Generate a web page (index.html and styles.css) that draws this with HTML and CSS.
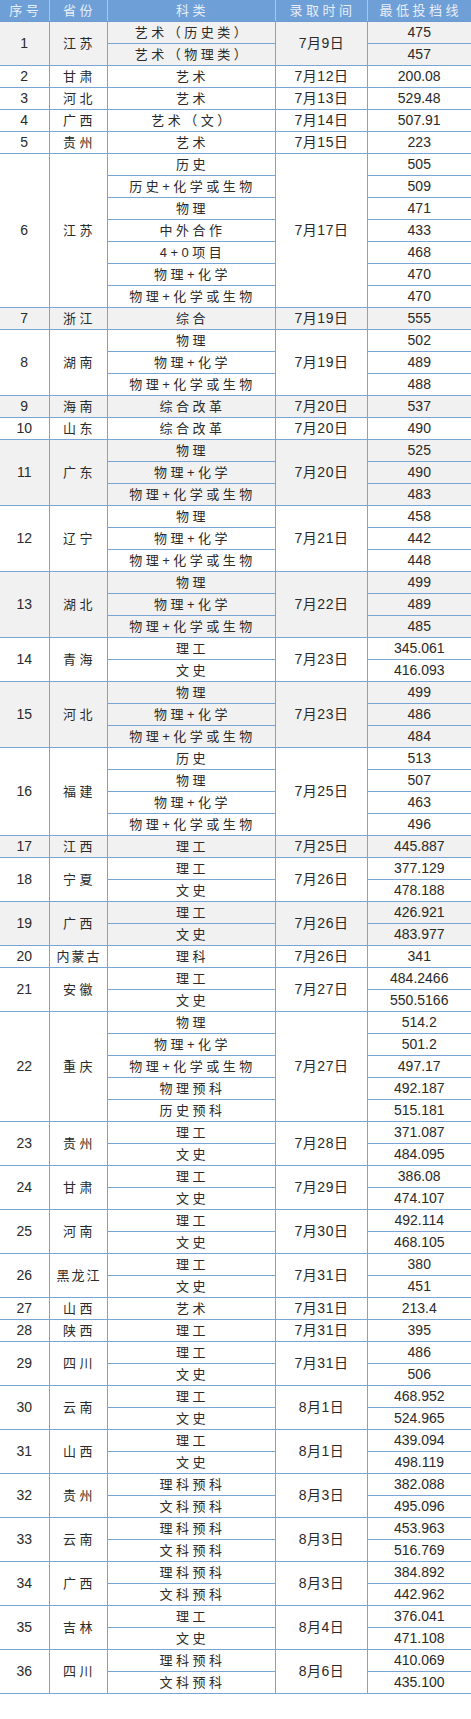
FILE: index.html
```html
<!DOCTYPE html>
<html lang="zh">
<head>
<meta charset="utf-8">
<title>录取时间与最低投档线</title>
<link rel="stylesheet" href="styles.css">
</head>
<body>
<table class="grid">
<colgroup>
<col class="c-no"><col class="c-prov"><col class="c-sub"><col class="c-date"><col class="c-score">
</colgroup>
<thead>
<tr><th>序号</th><th>省份</th><th>科类</th><th>录取时间</th><th>最低投档线</th></tr>
</thead>
<tbody>
<tr class="alt"><td rowspan="2">1</td><td rowspan="2" class="prov">江苏</td><td class="sub">艺术（历史类）</td><td rowspan="2" class="date">7月9日</td><td class="score">475</td></tr>
<tr class="alt"><td class="sub">艺术（物理类）</td><td class="score">457</td></tr>
<tr><td>2</td><td class="prov">甘肃</td><td class="sub">艺术</td><td class="date">7月12日</td><td class="score">200.08</td></tr>
<tr><td>3</td><td class="prov">河北</td><td class="sub">艺术</td><td class="date">7月13日</td><td class="score">529.48</td></tr>
<tr><td>4</td><td class="prov">广西</td><td class="sub">艺术（文）</td><td class="date">7月14日</td><td class="score">507.91</td></tr>
<tr><td>5</td><td class="prov">贵州</td><td class="sub">艺术</td><td class="date">7月15日</td><td class="score">223</td></tr>
<tr><td rowspan="7">6</td><td rowspan="7" class="prov">江苏</td><td class="sub">历史</td><td rowspan="7" class="date">7月17日</td><td class="score">505</td></tr>
<tr><td class="sub">历史+化学或生物</td><td class="score">509</td></tr>
<tr><td class="sub">物理</td><td class="score">471</td></tr>
<tr><td class="sub">中外合作</td><td class="score">433</td></tr>
<tr><td class="sub">4+0项目</td><td class="score">468</td></tr>
<tr><td class="sub">物理+化学</td><td class="score">470</td></tr>
<tr><td class="sub">物理+化学或生物</td><td class="score">470</td></tr>
<tr class="alt"><td>7</td><td class="prov">浙江</td><td class="sub">综合</td><td class="date">7月19日</td><td class="score">555</td></tr>
<tr><td rowspan="3">8</td><td rowspan="3" class="prov">湖南</td><td class="sub">物理</td><td rowspan="3" class="date">7月19日</td><td class="score">502</td></tr>
<tr><td class="sub">物理+化学</td><td class="score">489</td></tr>
<tr><td class="sub">物理+化学或生物</td><td class="score">488</td></tr>
<tr class="alt"><td>9</td><td class="prov">海南</td><td class="sub">综合改革</td><td class="date">7月20日</td><td class="score">537</td></tr>
<tr><td>10</td><td class="prov">山东</td><td class="sub">综合改革</td><td class="date">7月20日</td><td class="score">490</td></tr>
<tr class="alt"><td rowspan="3">11</td><td rowspan="3" class="prov">广东</td><td class="sub">物理</td><td rowspan="3" class="date">7月20日</td><td class="score">525</td></tr>
<tr class="alt"><td class="sub">物理+化学</td><td class="score">490</td></tr>
<tr class="alt"><td class="sub">物理+化学或生物</td><td class="score">483</td></tr>
<tr><td rowspan="3">12</td><td rowspan="3" class="prov">辽宁</td><td class="sub">物理</td><td rowspan="3" class="date">7月21日</td><td class="score">458</td></tr>
<tr><td class="sub">物理+化学</td><td class="score">442</td></tr>
<tr><td class="sub">物理+化学或生物</td><td class="score">448</td></tr>
<tr class="alt"><td rowspan="3">13</td><td rowspan="3" class="prov">湖北</td><td class="sub">物理</td><td rowspan="3" class="date">7月22日</td><td class="score">499</td></tr>
<tr class="alt"><td class="sub">物理+化学</td><td class="score">489</td></tr>
<tr class="alt"><td class="sub">物理+化学或生物</td><td class="score">485</td></tr>
<tr><td rowspan="2">14</td><td rowspan="2" class="prov">青海</td><td class="sub">理工</td><td rowspan="2" class="date">7月23日</td><td class="score">345.061</td></tr>
<tr><td class="sub">文史</td><td class="score">416.093</td></tr>
<tr class="alt"><td rowspan="3">15</td><td rowspan="3" class="prov">河北</td><td class="sub">物理</td><td rowspan="3" class="date">7月23日</td><td class="score">499</td></tr>
<tr class="alt"><td class="sub">物理+化学</td><td class="score">486</td></tr>
<tr class="alt"><td class="sub">物理+化学或生物</td><td class="score">484</td></tr>
<tr><td rowspan="4">16</td><td rowspan="4" class="prov">福建</td><td class="sub">历史</td><td rowspan="4" class="date">7月25日</td><td class="score">513</td></tr>
<tr><td class="sub">物理</td><td class="score">507</td></tr>
<tr><td class="sub">物理+化学</td><td class="score">463</td></tr>
<tr><td class="sub">物理+化学或生物</td><td class="score">496</td></tr>
<tr class="alt"><td>17</td><td class="prov">江西</td><td class="sub">理工</td><td class="date">7月25日</td><td class="score">445.887</td></tr>
<tr><td rowspan="2">18</td><td rowspan="2" class="prov">宁夏</td><td class="sub">理工</td><td rowspan="2" class="date">7月26日</td><td class="score">377.129</td></tr>
<tr><td class="sub">文史</td><td class="score">478.188</td></tr>
<tr class="alt"><td rowspan="2">19</td><td rowspan="2" class="prov">广西</td><td class="sub">理工</td><td rowspan="2" class="date">7月26日</td><td class="score">426.921</td></tr>
<tr class="alt"><td class="sub">文史</td><td class="score">483.977</td></tr>
<tr><td>20</td><td class="prov tight">内蒙古</td><td class="sub">理科</td><td class="date">7月26日</td><td class="score">341</td></tr>
<tr><td rowspan="2">21</td><td rowspan="2" class="prov">安徽</td><td class="sub">理工</td><td rowspan="2" class="date">7月27日</td><td class="score">484.2466</td></tr>
<tr><td class="sub">文史</td><td class="score">550.5166</td></tr>
<tr><td rowspan="5">22</td><td rowspan="5" class="prov">重庆</td><td class="sub">物理</td><td rowspan="5" class="date">7月27日</td><td class="score">514.2</td></tr>
<tr><td class="sub">物理+化学</td><td class="score">501.2</td></tr>
<tr><td class="sub">物理+化学或生物</td><td class="score">497.17</td></tr>
<tr><td class="sub">物理预科</td><td class="score">492.187</td></tr>
<tr><td class="sub">历史预科</td><td class="score">515.181</td></tr>
<tr><td rowspan="2">23</td><td rowspan="2" class="prov">贵州</td><td class="sub">理工</td><td rowspan="2" class="date">7月28日</td><td class="score">371.087</td></tr>
<tr><td class="sub">文史</td><td class="score">484.095</td></tr>
<tr><td rowspan="2">24</td><td rowspan="2" class="prov">甘肃</td><td class="sub">理工</td><td rowspan="2" class="date">7月29日</td><td class="score">386.08</td></tr>
<tr><td class="sub">文史</td><td class="score">474.107</td></tr>
<tr><td rowspan="2">25</td><td rowspan="2" class="prov">河南</td><td class="sub">理工</td><td rowspan="2" class="date">7月30日</td><td class="score">492.114</td></tr>
<tr><td class="sub">文史</td><td class="score">468.105</td></tr>
<tr><td rowspan="2">26</td><td rowspan="2" class="prov tight">黑龙江</td><td class="sub">理工</td><td rowspan="2" class="date">7月31日</td><td class="score">380</td></tr>
<tr><td class="sub">文史</td><td class="score">451</td></tr>
<tr><td>27</td><td class="prov">山西</td><td class="sub">艺术</td><td class="date">7月31日</td><td class="score">213.4</td></tr>
<tr><td>28</td><td class="prov">陕西</td><td class="sub">理工</td><td class="date">7月31日</td><td class="score">395</td></tr>
<tr><td rowspan="2">29</td><td rowspan="2" class="prov">四川</td><td class="sub">理工</td><td rowspan="2" class="date">7月31日</td><td class="score">486</td></tr>
<tr><td class="sub">文史</td><td class="score">506</td></tr>
<tr><td rowspan="2">30</td><td rowspan="2" class="prov">云南</td><td class="sub">理工</td><td rowspan="2" class="date">8月1日</td><td class="score">468.952</td></tr>
<tr><td class="sub">文史</td><td class="score">524.965</td></tr>
<tr><td rowspan="2">31</td><td rowspan="2" class="prov">山西</td><td class="sub">理工</td><td rowspan="2" class="date">8月1日</td><td class="score">439.094</td></tr>
<tr><td class="sub">文史</td><td class="score">498.119</td></tr>
<tr><td rowspan="2">32</td><td rowspan="2" class="prov">贵州</td><td class="sub">理科预科</td><td rowspan="2" class="date">8月3日</td><td class="score">382.088</td></tr>
<tr><td class="sub">文科预科</td><td class="score">495.096</td></tr>
<tr><td rowspan="2">33</td><td rowspan="2" class="prov">云南</td><td class="sub">理科预科</td><td rowspan="2" class="date">8月3日</td><td class="score">453.963</td></tr>
<tr><td class="sub">文科预科</td><td class="score">516.769</td></tr>
<tr><td rowspan="2">34</td><td rowspan="2" class="prov">广西</td><td class="sub">理科预科</td><td rowspan="2" class="date">8月3日</td><td class="score">384.892</td></tr>
<tr><td class="sub">文科预科</td><td class="score">442.962</td></tr>
<tr><td rowspan="2">35</td><td rowspan="2" class="prov">吉林</td><td class="sub">理工</td><td rowspan="2" class="date">8月4日</td><td class="score">376.041</td></tr>
<tr><td class="sub">文史</td><td class="score">471.108</td></tr>
<tr><td rowspan="2">36</td><td rowspan="2" class="prov">四川</td><td class="sub">理科预科</td><td rowspan="2" class="date">8月6日</td><td class="score">410.069</td></tr>
<tr><td class="sub">文科预科</td><td class="score">435.100</td></tr>
</tbody>
</table>
</body>
</html>
```
FILE: styles.css
```css
html, body {
  margin: 0;
  padding: 0;
  background: #ffffff;
}

.grid {
  border-collapse: collapse;
  table-layout: fixed;
  width: 471px;
  font-family: "Liberation Sans", "Noto Sans CJK SC", sans-serif;
  font-size: 13px;
  color: #2a2a2a;
}

.c-no { width: 49px; }
.c-prov { width: 58px; }
.c-sub { width: 168px; }
.c-date { width: 92px; }
.c-score { width: 104px; }

.grid th {
  height: 21px;
  padding: 0 0 0 3px;
  background: #6f9fd7;
  color: #e6eef9;
  font-weight: normal;
  letter-spacing: 3.5px;
  border-right: 1px solid #a9c6ea;
  border-bottom: 1px solid #6e9ad0;
  text-align: center;
  line-height: 21px;
}

.grid td {
  height: 21px;
  padding: 0;
  border: 1px solid #7aa3d6;
  text-align: center;
  line-height: 21px;
  background: #ffffff;
  font-size: 14px;
}

.grid tr.alt td {
  background: #f1f1f1;
}

.grid th:first-child,
.grid td:first-child {
  border-left: none;
}

.grid th:last-child,
.grid td.score {
  border-right: none;
}

.grid td.prov {
  font-size: 13px;
  letter-spacing: 3.5px;
  padding-left: 3px;
}

.grid td.prov.tight {
  letter-spacing: 2px;
  padding-left: 2px;
}

.grid td.sub {
  font-size: 13px;
  letter-spacing: 3.5px;
  padding-left: 3px;
}

.grid td.date {
  letter-spacing: 0.5px;
  padding-left: 1px;
}
```
